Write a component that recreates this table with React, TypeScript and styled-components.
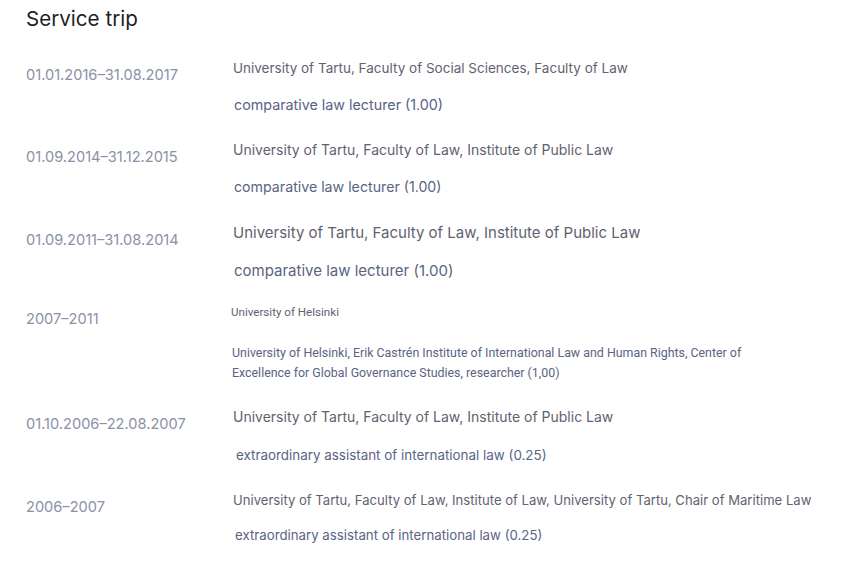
import styled, { createGlobalStyle } from 'styled-components';

type Trip = {
  period: string;
  org: string;
  position: string;
  orgSize: number;
  posSize: number;
  space: number;
  posGap: number;
  posIndent?: number;
  compact?: boolean;
};

const trips: Trip[] = [
  {
    period: '01.01.2016–31.08.2017',
    org: 'University of Tartu, Faculty of Social Sciences, Faculty of Law',
    position: 'comparative law lecturer (1.00)',
    orgSize: 13.5,
    posSize: 14.3,
    space: 0,
    posGap: 17,
  },
  {
    period: '01.09.2014–31.12.2015',
    org: 'University of Tartu, Faculty of Law, Institute of Public Law',
    position: 'comparative law lecturer (1.00)',
    orgSize: 14,
    posSize: 14.2,
    space: 25,
    posGap: 17,
  },
  {
    period: '01.09.2011–31.08.2014',
    org: 'University of Tartu, Faculty of Law, Institute of Public Law',
    position: 'comparative law lecturer (1.00)',
    orgSize: 15,
    posSize: 15,
    space: 26,
    posGap: 18,
  },
  {
    period: '2007–2011',
    org: 'University of Helsinki',
    position:
      'University of Helsinki, Erik Castrén Institute of International Law and Human Rights, Center of Excellence for Global Governance Studies, researcher (1,00)',
    orgSize: 11.6,
    posSize: 12.4,
    space: 21,
    posGap: 21,
    posIndent: -1,
    compact: true,
  },
  {
    period: '01.10.2006–22.08.2007',
    org: 'University of Tartu, Faculty of Law, Institute of Public Law',
    position: 'extraordinary assistant of international law (0.25)',
    orgSize: 14,
    posSize: 13.4,
    space: 24,
    posGap: 18,
    posIndent: 3,
  },
  {
    period: '2006–2007',
    org: 'University of Tartu, Faculty of Law, Institute of Law, University of Tartu, Chair of Maritime Law',
    position: 'extraordinary assistant of international law (0.25)',
    orgSize: 13.1,
    posSize: 13.25,
    space: 25,
    posGap: 15,
    posIndent: 2,
  },
];

const App = () => {
  return (
    <>
      <GlobalStyle />
      <Page>
        <Title>Service trip</Title>
        <List>
          {trips.map((trip) => (
            <Row key={trip.period} $space={trip.space}>
              <Period>{trip.period}</Period>
              <Details>
                <Org $size={trip.orgSize} $compact={trip.compact} $indent={trip.compact ? -2 : 0}>
                  {trip.org}
                </Org>
                <Position
                  $size={trip.posSize}
                  $gap={trip.posGap}
                  $indent={trip.posIndent ?? 1}
                  $compact={trip.compact}
                >
                  {trip.position}
                </Position>
              </Details>
            </Row>
          ))}
        </List>
      </Page>
    </>
  );
};

export default App;

const GlobalStyle = createGlobalStyle`
  body {
    margin: 0;
    background: #ffffff;
    font-family: Inter, "Noto Sans", sans-serif;
  }
`;

const Page = styled.div`
  padding: 5px 26px 0;
`;

const Title = styled.h2`
  margin: 0;
  font-size: 20.6px;
  line-height: 28px;
  font-weight: 400;
  color: #1f1f1f;
`;

const List = styled.div`
  margin-top: 25px;
  display: flex;
  flex-direction: column;
`;

const Row = styled.div<{ $space: number }>`
  display: grid;
  grid-template-columns: 207px 1fr;
  margin-top: ${(p) => p.$space}px;
`;

const Period = styled.div`
  margin-top: 7px;
  font-size: 14.6px;
  line-height: 20px;
  color: #8a91a6;
  white-space: nowrap;
`;

const Details = styled.div`
  display: flex;
  flex-direction: column;
  max-width: 530px;
`;

const Org = styled.div<{ $size: number; $compact?: boolean; $indent: number }>`
  margin-left: ${(p) => p.$indent}px;
  font-family: ${(p) => (p.$compact ? 'Roboto, sans-serif' : 'Inter, sans-serif')};
  font-size: ${(p) => p.$size}px;
  line-height: 20px;
  color: #5f6270;
  white-space: nowrap;
`;

const Position = styled.div<{ $size: number; $gap: number; $indent: number; $compact?: boolean }>`
  margin-top: ${(p) => p.$gap}px;
  margin-left: ${(p) => p.$indent}px;
  font-family: ${(p) => (p.$compact ? 'Roboto, sans-serif' : 'Inter, sans-serif')};
  font-size: ${(p) => p.$size}px;
  line-height: 20px;
  color: #5a6384;
`;
